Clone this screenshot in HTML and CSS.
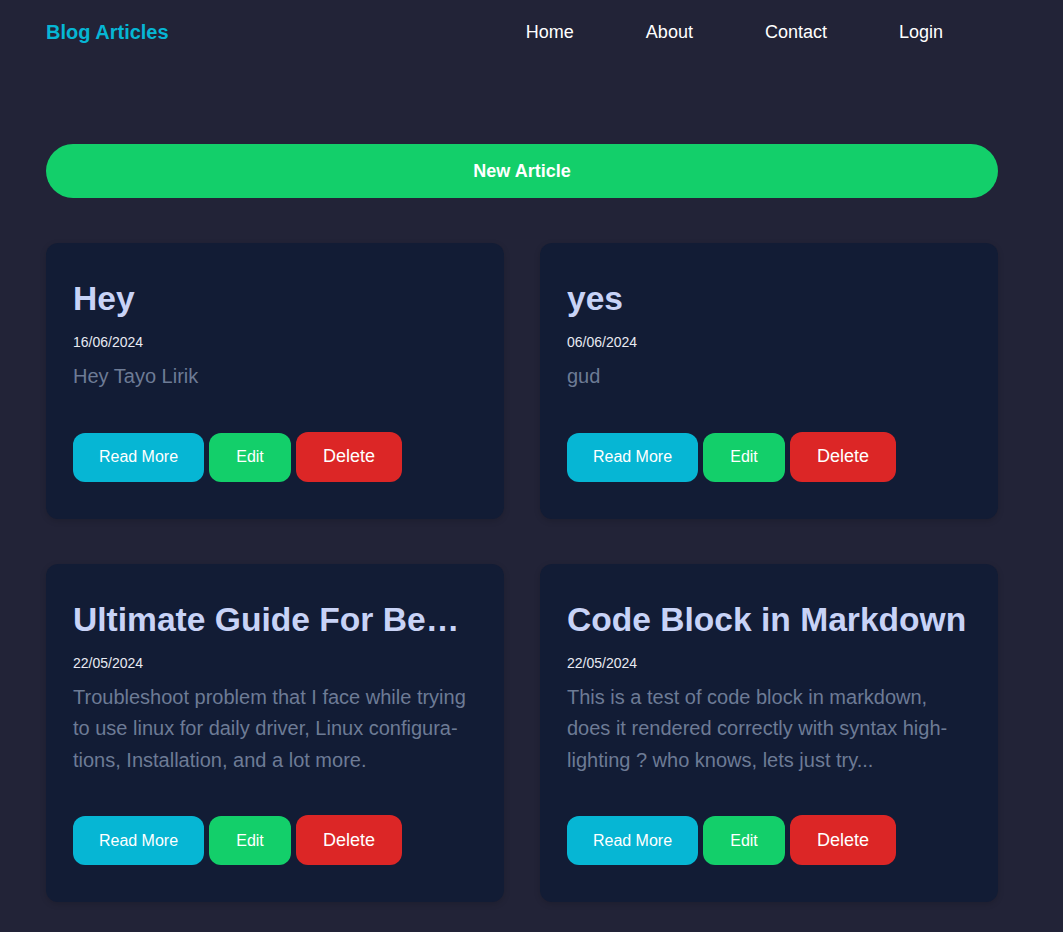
FILE: index.html
```html
<!DOCTYPE html>
<html lang="en">
<head>
<meta charset="utf-8">
<title>Blog Articles</title>
<link rel="stylesheet" href="styles.css">
</head>
<body>
<div class="page">
  <header class="header">
    <a class="brand" href="#">Blog Articles</a>
    <nav class="nav">
      <a href="#">Home</a>
      <a href="#">About</a>
      <a href="#">Contact</a>
      <a href="#">Login</a>
    </nav>
  </header>

  <button class="new-article">New Article</button>

  <main class="grid">
    <article class="card">
      <h2 class="card-title">Hey</h2>
      <div class="card-date">16/06/2024</div>
      <p class="card-desc">Hey Tayo Lirik</p>
      <div class="actions">
        <a class="btn btn-read" href="#">Read More</a>
        <a class="btn btn-edit" href="#">Edit</a>
        <button class="btn btn-delete">Delete</button>
      </div>
    </article>

    <article class="card">
      <h2 class="card-title">yes</h2>
      <div class="card-date">06/06/2024</div>
      <p class="card-desc">gud</p>
      <div class="actions">
        <a class="btn btn-read" href="#">Read More</a>
        <a class="btn btn-edit" href="#">Edit</a>
        <button class="btn btn-delete">Delete</button>
      </div>
    </article>

    <article class="card">
      <h2 class="card-title" title="Ultimate Guide For Beginner Linux User">Ultimate Guide For Beginner Linux User</h2>
      <div class="card-date">22/05/2024</div>
      <p class="card-desc">Troubleshoot problem that I face while trying to use linux for daily driver, Linux configura&shy;tions, Installation, and a lot more.</p>
      <div class="actions">
        <a class="btn btn-read" href="#">Read More</a>
        <a class="btn btn-edit" href="#">Edit</a>
        <button class="btn btn-delete">Delete</button>
      </div>
    </article>

    <article class="card">
      <h2 class="card-title">Code Block in Markdown</h2>
      <div class="card-date">22/05/2024</div>
      <p class="card-desc">This is a test of code block in markdown, does it rendered correctly with syntax high&shy;lighting ? who knows, lets just try...</p>
      <div class="actions">
        <a class="btn btn-read" href="#">Read More</a>
        <a class="btn btn-edit" href="#">Edit</a>
        <button class="btn btn-delete">Delete</button>
      </div>
    </article>
  </main>
</div>
</body>
</html>
```

FILE: styles.css
```css
* {
  box-sizing: border-box;
}

html, body {
  margin: 0;
  padding: 0;
  background: #222337;
}

body {
  font-family: "Liberation Sans", Arial, sans-serif;
  color: #ffffff;
  min-height: 932px;
}

.page {
  width: 952px;
  margin-left: 46px;
}

.header {
  height: 64px;
  display: flex;
  align-items: center;
  justify-content: space-between;
  padding-right: 55px;
}

.brand {
  font-size: 20px;
  font-weight: bold;
  color: #06b6d4;
  text-decoration: none;
}

.nav {
  display: flex;
  gap: 72px;
}

.nav a {
  font-size: 18px;
  color: #ffffff;
  text-decoration: none;
}

.new-article {
  display: block;
  width: 100%;
  height: 54px;
  margin-top: 80px;
  border: none;
  border-radius: 27px;
  background: #13cf6a;
  color: #ffffff;
  font-family: "Liberation Sans", Arial, sans-serif;
  font-size: 18px;
  font-weight: bold;
}

.grid {
  margin-top: 45px;
  display: grid;
  grid-template-columns: 458px 458px;
  column-gap: 36px;
  row-gap: 45px;
  padding-bottom: 40px;
}

.card {
  background: #121c35;
  border-radius: 12px;
  padding: 36px 27px 37px;
  min-width: 0;
  box-shadow: 0 2px 6px rgba(0, 0, 0, 0.15);
}

.card-title {
  margin: 0;
  font-size: 33.6px;
  line-height: 40px;
  font-weight: bold;
  color: #c8d3f7;
  white-space: nowrap;
  overflow: hidden;
  text-overflow: ellipsis;
}

.card-date {
  margin-top: 13px;
  font-size: 14px;
  line-height: 20px;
  color: #e8eaf2;
}

.card-desc {
  margin: 9px 0 0;
  font-size: 20px;
  line-height: 31.5px;
  color: #6d7b95;
}

.actions {
  margin-top: 39px;
  display: flex;
  align-items: flex-end;
  gap: 5px;
}

.btn {
  display: inline-flex;
  align-items: center;
  justify-content: center;
  border: none;
  border-radius: 12px;
  color: #ffffff;
  text-decoration: none;
  font-family: "Liberation Sans", Arial, sans-serif;
  font-size: 16px;
  height: 49px;
  padding: 0;
  white-space: nowrap;
}

.btn-read {
  background: #06b6d4;
  width: 131px;
}

.btn-edit {
  background: #13cf6a;
  width: 82px;
}

.btn-delete {
  background: #dc2626;
  font-size: 18px;
  height: 50px;
  width: 106px;
}
```
